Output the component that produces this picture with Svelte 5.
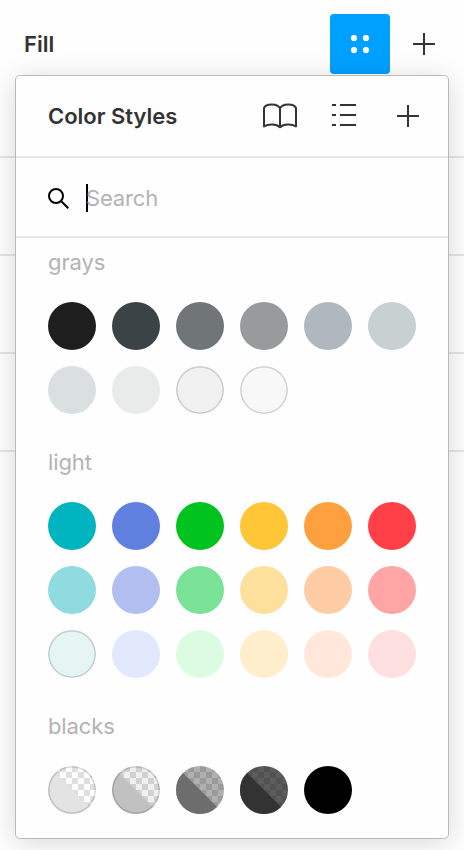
<script>
  const groups = [
    {
      name: 'grays',
      colors: [
        { c: '#1e1e1f' }, { c: '#3b4346' }, { c: '#707577' }, { c: '#979b9c' }, { c: '#b1b7bf' }, { c: '#c8d0d1' },
        { c: '#dadfe0' }, { c: '#e8ebea' }, { c: '#f1f1f1', ring: true }, { c: '#f8f8f8', ring: true }
      ]
    },
    {
      name: 'light',
      colors: [
        { c: '#00b5c0' }, { c: '#6080df' }, { c: '#00c31f' }, { c: '#ffc737' }, { c: '#ffa03e' }, { c: '#ff4047' },
        { c: '#8fdbdf' }, { c: '#b0bff0' }, { c: '#79e297' }, { c: '#fde09b' }, { c: '#fdcca3' }, { c: '#ffa5a5' },
        { c: '#e4f5f4', ring: true }, { c: '#e3e9fd' }, { c: '#dcfce1' }, { c: '#feeecb' }, { c: '#ffe8da' }, { c: '#fee0e1' }
      ]
    },
    {
      name: 'blacks',
      colors: [
        { c: '#e3e3e3', alpha: 0, ring: true },
        { c: '#c1c1c1', alpha: 0.06, ring: true },
        { c: '#6d6d6d', alpha: 0.31 },
        { c: '#333333', alpha: 0.64 },
        { c: '#000000' }
      ]
    }
  ];
  const cells = [];
  for (let r = 0; r < 8; r++) for (let k = 0; k < 8; k++) if ((r + k) % 2 === 0) cells.push([k * 6, r * 6]);
</script>

{#snippet plus()}
  <svg class="plus" width="22" height="22" viewBox="0 0 22 22"><path d="M11 0v22M0 11h22" /></svg>
{/snippet}

<div class="page">
  <header class="fill-row">
    <h2>Fill</h2>
    <button class="active" aria-label="Styles">
      <svg width="20" height="20" viewBox="0 0 20 20">
        <circle cx="4" cy="4" r="3.1" /><circle cx="16" cy="4" r="3.1" /><circle cx="4" cy="16" r="3.1" /><circle cx="16" cy="16" r="3.1" />
      </svg>
    </button>
    {@render plus()}
  </header>
  <div class="sections"><i></i><i></i><i></i><i></i></div>

  <section class="panel">
    <div class="title">
      <h2>Color Styles</h2>
      <svg class="book" width="36" height="28" viewBox="0 0 36 28">
        <path stroke-linejoin="round" d="M18 6.500C16 1.200 4 1.200 2 6V24.500c4-2.700 12.500-2.800 16 .7 3.500-3.500 12-3.400 16-.7V6C32 1.200 20 1.200 18 6.500V25.500" />
      </svg>
      <svg class="list" width="24" height="24" viewBox="0 0 24 24"><path d="M0 2h4M8 2h16M0 12h4M8 12h16M0 22h4M8 22h16" /></svg>
      {@render plus()}
    </div>
    <div class="search">
      <svg width="22" height="22" viewBox="0 0 22 22"><circle cx="8" cy="8" r="7" /><path d="M13 13l7.300 7.300" /></svg>
      <span class="caret"></span>
      <span class="placeholder">Search</span>
    </div>
    {#each groups as group}
      <div class="group">
        <h3>{group.name}</h3>
        <div class="swatches">
          {#each group.colors as s}
            <span class="swatch" class:ring={s.ring} style="background:{s.alpha === undefined ? s.c : '#fff'}">
              {#if s.alpha !== undefined}
                <svg width="48" height="48" viewBox="0 0 48 48">
                  <g shape-rendering="crispEdges">
                    {#each cells as [x, y]}<rect {x} {y} width="6" height="6" fill="#dfdfdf" />{/each}
                  </g>
                  <path d="M0 0h48v48H0z" fill="#000" fill-opacity={s.alpha} />
                  <path d="M0 0L48 48H0z" fill={s.c} />
                </svg>
              {/if}
            </span>
          {/each}
        </div>
      </div>
    {/each}
  </section>
</div>

<style>
  :global(body) { margin: 0; background: #fefefe; }
  .page {
    position: relative;
    width: 464px;
    height: 850px;
    overflow: hidden;
    background: #fefefe;
    font: 22px/32px Inter, "Liberation Sans", sans-serif;
    color: #333;
  }
  h2, h3 { margin: 0; font-size: 22px; line-height: 32px; }
  h2 { font-weight: 600; flex: 1; }
  h3 { font-weight: 400; color: #b3b3b3; letter-spacing: -0.1px; }
  svg { display: block; fill: none; flex: none; }
  .plus, .book, .list { stroke: #333; stroke-width: 2; }
  .fill-row {
    display: flex;
    align-items: center;
    height: 60px;
    padding: 14px 29px 0 24px;
  }
  .active {
    width: 60px;
    height: 60px;
    border: 0;
    padding: 0;
    border-radius: 4px;
    background: #00a0ff;
    display: grid;
    place-items: center;
    margin-right: 23px;
  }
  .active svg { fill: #fff; }
  .sections { padding-top: 82px; }
  .sections i { display: block; height: 2px; margin-bottom: 96px; background: #e5e5e5; }
  .panel {
    position: absolute;
    left: 15px;
    top: 75px;
    width: 434px;
    height: 764px;
    box-sizing: border-box;
    border: 1px solid #b9b9b9;
    border-radius: 5px;
    background: #fefefe;
    box-shadow: 0 4px 28px rgba(0, 0, 0, 0.15);
  }
  .title {
    display: flex;
    align-items: center;
    height: 80px;
    padding: 0 29px 0 32px;
    border-bottom: 2px solid #e5e5e5;
  }
  .book { margin-right: 34px; }
  .list { margin: 0 41px 2px 0; }
  .search {
    display: flex;
    align-items: center;
    height: 76px;
    padding: 2px 0 0 32px;
    border-bottom: 2px solid #e5e5e5;
    color: #b3b3b3;
    letter-spacing: -0.15px;
  }
  .search svg { stroke: #000; stroke-width: 2; margin-top: 1px; }
  .caret { width: 2px; height: 28px; background: #000; margin: 0 -2px 0 16px; }
  .group { padding: 8px 32px 24px; }
  .swatches {
    display: grid;
    grid-template-columns: repeat(6, 48px);
    gap: 16px;
    padding-top: 24px;
  }
  .swatch {
    position: relative;
    height: 48px;
    border-radius: 50%;
    overflow: hidden;
  }
  .ring::after {
    content: "";
    position: absolute;
    inset: 0;
    border-radius: 50%;
    box-shadow: inset 0 0 0 1.500px rgba(0, 0, 0, 0.16);
  }
</style>
